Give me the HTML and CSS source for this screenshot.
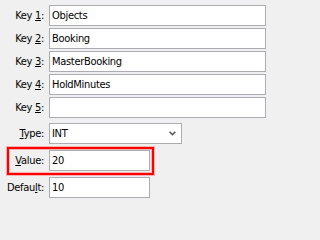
FILE: index.html
```html
<!DOCTYPE html>
<html>
<head>
<meta charset="utf-8">
<link rel="stylesheet" href="styles.css">
</head>
<body>
<div class="form">
  <div class="row key">
    <span class="label">Key <u>1</u>:</span>
    <div class="field wide">Objects</div>
  </div>
  <div class="row key">
    <span class="label">Key <u>2</u>:</span>
    <div class="field wide">Booking</div>
  </div>
  <div class="row key">
    <span class="label">Key <u>3</u>:</span>
    <div class="field wide">MasterBooking</div>
  </div>
  <div class="row key">
    <span class="label">Key <u>4</u>:</span>
    <div class="field wide">HoldMinutes</div>
  </div>
  <div class="row key last">
    <span class="label">Key <u>5</u>:</span>
    <div class="field wide"></div>
  </div>
  <div class="row type">
    <span class="label"><u>T</u>ype:</span>
    <div class="field select">
      <span>INT</span>
      <svg class="chev" width="7" height="5" viewBox="0 0 7 5"><path d="M0.7 0.7 L3.5 3.7 L6.3 0.7" fill="none" stroke="#555" stroke-width="1.6"/></svg>
    </div>
  </div>
  <div class="row highlight">
    <span class="label"><u>V</u>alue:</span>
    <div class="field narrow">20</div>
  </div>
  <div class="row dflt">
    <span class="label">Defau<u>l</u>t:</span>
    <div class="field narrow">10</div>
  </div>
</div>
</body>
</html>
```

FILE: styles.css
```css
html, body {
  margin: 0;
  background: #f0f0f0;
}
body {
  font-family: "DejaVu Sans Condensed", "DejaVu Sans", sans-serif;
  font-stretch: condensed;
  font-size: 11px;
  letter-spacing: -0.3px;
  color: #000;
  width: 271px;
  height: 202px;
  overflow: hidden;
}
.form {
  display: flex;
  flex-direction: column;
  padding-top: 5px;
}
.row {
  display: flex;
  align-items: center;
  height: 21px;
}
.row.key {
  margin-bottom: 2px;
}
.row.key.last {
  margin-bottom: 5px;
}
.label {
  width: 44px;
  margin-right: 5px;
  text-align: right;
  white-space: nowrap;
}
.label u {
  text-underline-offset: 1px;
}
.field {
  box-sizing: border-box;
  height: 21px;
  border: 1px solid #abadb3;
  background: #fff;
  padding-left: 2px;
  line-height: 19px;
  white-space: nowrap;
}
.wide {
  width: 217px;
}
.select {
  width: 133px;
  display: flex;
  align-items: center;
  justify-content: space-between;
  padding-right: 5px;
}
.chev {
  display: block;
}
.narrow {
  width: 101px;
}
.highlight {
  box-sizing: border-box;
  height: 28px;
  width: 147px;
  margin: 3px 0 2px 7px;
  border: 2px solid #ff0000;
  box-shadow: 0 0 0 1px rgba(255, 0, 0, 0.25), inset 0 0 0 1px rgba(255, 0, 0, 0.25);
  padding: 0 2px 1px 0;
}
.highlight .label {
  width: 35px;
}
```
